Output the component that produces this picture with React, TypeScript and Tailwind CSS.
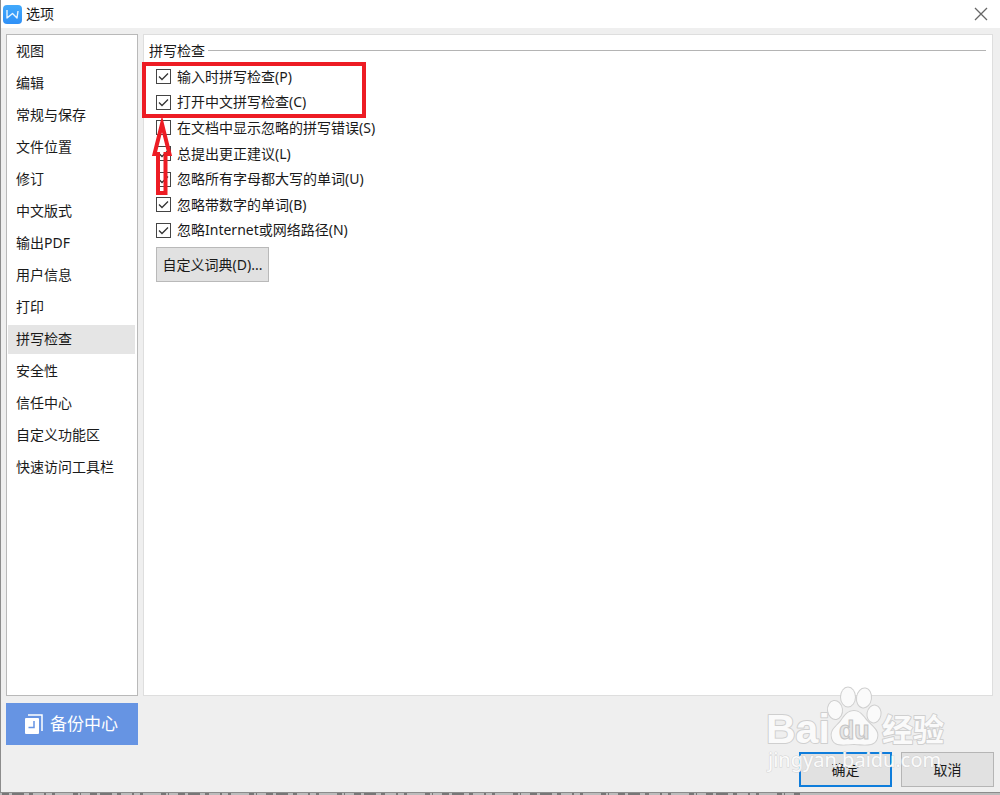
import { useState } from "react";

const sections = [
  "视图",
  "编辑",
  "常规与保存",
  "文件位置",
  "修订",
  "中文版式",
  "输出PDF",
  "用户信息",
  "打印",
  "拼写检查",
  "安全性",
  "信任中心",
  "自定义功能区",
  "快速访问工具栏",
];

const spellOptions = [
  { id: "typing", label: "输入时拼写检查(P)", on: true },
  { id: "chinese", label: "打开中文拼写检查(C)", on: true },
  { id: "ignored", label: "在文档中显示忽略的拼写错误(S)", on: false },
  { id: "suggest", label: "总提出更正建议(L)", on: true },
  { id: "upper", label: "忽略所有字母都大写的单词(U)", on: true },
  { id: "digits", label: "忽略带数字的单词(B)", on: true },
  { id: "paths", label: "忽略Internet或网络路径(N)", on: true },
];

export default function App() {
  const [active, setActive] = useState("拼写检查");

  return (
    <div className="flex min-h-screen flex-col bg-[#efefef] font-['Noto_Sans','Noto_Sans_CJK_SC',sans-serif] text-sm text-[#1a1a1a]">
      <div className="relative flex flex-1 flex-col border-b border-l border-[#8c8c8c]">
        <TitleBar />

        <div className="flex flex-1 gap-[5px] pl-[5px] pr-[7px] pt-[6px]">
          <nav
            aria-label="选项"
            className="w-[132px] shrink-0 border border-[#b9b9b9] bg-white pl-px pr-[2px] pt-[2px]"
          >
            <ul>
              {sections.map((name) => (
                <li key={name} className="mb-[3px]">
                  <button
                    type="button"
                    onClick={() => setActive(name)}
                    className={`block h-[29px] w-full whitespace-nowrap pb-[2px] pl-2 text-left leading-5 ${
                      active === name ? "bg-[#e5e5e5]" : ""
                    }`}
                  >
                    {name}
                  </button>
                </li>
              ))}
            </ul>
          </nav>
          <SpellPanel />
        </div>

        <footer className="mb-[5px] mt-[7px] flex h-[84px] justify-between pl-[5px] pr-[6px]">
          <button
            type="button"
            className="flex h-[42px] w-[132px] items-center gap-[7px] self-start bg-[#6694e3] pl-[19px] text-[17px] text-white"
          >
            <BackupIcon />
            备份中心
          </button>
          <div className="flex gap-[9px] self-end">
            <button type="button" className="h-[35px] w-[93px] border-2 border-[#0f7ddb] bg-[#e1e1e1]">
              确定
            </button>
            <button type="button" className="h-[35px] w-[93px] border border-[#b5b5b5] bg-[#e1e1e1]">
              取消
            </button>
          </div>
        </footer>

        <Watermark />
      </div>
      <PageEdge />
    </div>
  );
}

function TitleBar() {
  return (
    <header className="flex h-7 shrink-0 items-center bg-white pl-[2px] pr-3">
      <svg width="19" height="19" viewBox="0 0 19 19" aria-hidden="true">
        <defs>
          <linearGradient id="logo" x1="0" y1="0" x2="0" y2="1">
            <stop offset="0" stopColor="#42a9fb" />
            <stop offset="1" stopColor="#2f90f7" />
          </linearGradient>
        </defs>
        <rect width="19" height="19" rx="4" fill="url(#logo)" />
        <path
          d="M4 5V13L9.5 8.5L14 13L15 6"
          fill="none"
          stroke="#e6f4ff"
          strokeWidth="1.4"
          strokeLinejoin="round"
        />
      </svg>
      <h1 className="ml-1 flex-1">选项</h1>
      <button type="button" aria-label="关闭">
        <svg width="14" height="14" viewBox="0 0 14 14" aria-hidden="true">
          <path d="M1 1L13 13M13 1L1 13" stroke="#666" strokeWidth="1.3" />
        </svg>
      </button>
    </header>
  );
}

function SpellPanel() {
  return (
    <main className="relative min-w-0 flex-1 border border-[#dedede] bg-white">
      <div className="flex h-[29px] items-center gap-[3px] pl-[5px] pr-[6px] pt-[2px]">
        <h2>拼写检查</h2>
        <span className="h-px flex-1 bg-[#b4b4b4]" />
      </div>

      <div className="flex h-[179px] flex-col pl-3">
        {spellOptions.map((opt) => (
          <CheckRow key={opt.id} {...opt} />
        ))}
      </div>

      <button
        type="button"
        className="ml-3 mt-1 h-[35px] w-[113px] whitespace-nowrap border border-[#b9b9b9] bg-[#e1e1e1]"
      >
        自定义词典(D)...
      </button>

      {/* highlight frame and arrow over the first two options */}
      <div className="pointer-events-none absolute -left-[2px] top-[27px] h-[56px] w-[224px] border-4 border-[#ed1c24]" />
      <svg
        className="pointer-events-none absolute left-[6px] top-[80px]"
        width="24"
        height="82"
        viewBox="0 0 24 82"
        aria-hidden="true"
      >
        <path
          d="M12 9L4.500 39H8V78H15.500V39H19.500Z"
          fill="none"
          stroke="#ed1c24"
          strokeWidth="4"
          strokeMiterlimit="10"
        />
      </svg>
    </main>
  );
}

function CheckRow({ id, label, on }: { id: string; label: string; on: boolean }) {
  return (
    <div className="flex flex-1 items-center gap-[6px]">
      <span className="grid">
        <input
          id={id}
          type="checkbox"
          defaultChecked={on}
          className="peer col-start-1 row-start-1 h-[15px] w-[15px] appearance-none border border-[#444] bg-white"
        />
        <svg
          className="pointer-events-none invisible col-start-1 row-start-1 peer-checked:visible"
          width="15"
          height="15"
          viewBox="0 0 15 15"
          aria-hidden="true"
        >
          <path d="M3 7.5L6 10.5L12 4.5" fill="none" stroke="#333" strokeWidth="1.3" />
        </svg>
      </span>
      <label htmlFor={id} className="whitespace-nowrap leading-5">
        {label}
      </label>
    </div>
  );
}

function BackupIcon() {
  return (
    <svg width="18" height="20" viewBox="0 0 18 20" aria-hidden="true">
      <path d="M3 1H17V17" fill="none" stroke="#fff" strokeWidth="1.5" />
      <rect x="0" y="4" width="14" height="16" rx="1" fill="#fff" />
      <path d="M9 7V13.5H3.5" fill="none" stroke="#6694e3" strokeWidth="1.5" />
    </svg>
  );
}

function Watermark() {
  return (
    <svg
      className="pointer-events-none absolute bottom-[13px] right-[46px]"
      width="190"
      height="96"
      viewBox="0 0 190 96"
      aria-hidden="true"
    >
      <g fill="#fafafa" stroke="#cfcfcf" strokeWidth="2" strokeLinejoin="round" paintOrder="stroke">
        <ellipse cx="71" cy="27" rx="7" ry="9" transform="rotate(-8 71 27)" />
        <ellipse cx="84" cy="14" rx="7" ry="9.5" />
        <ellipse cx="100" cy="15" rx="7" ry="9.5" transform="rotate(8 100 15)" />
        <ellipse cx="110" cy="31" rx="6.5" ry="8.5" transform="rotate(10 110 31)" />
        <path d="M90 28C96 28 99 33 103 38C109 44 115 48 113 55C111 63 102 62 90 61C78 62 70 63 68 55C66 47 72 44 77 38C81 32 84 28 90 28Z" />
        <g className="font-['Liberation_Sans','Noto_Sans_CJK_SC',sans-serif] font-bold">
          <text x="2" y="60" fontSize="41">
            Bai
          </text>
          <text x="118" y="58" fontSize="31">
            经验
          </text>
        </g>
      </g>
      <text
        x="75"
        y="56"
        fontSize="25"
        fill="#e6e6e6"
        stroke="#c4c4c4"
        strokeWidth="1"
        className="font-['Liberation_Sans',sans-serif] font-bold"
      >
        du
      </text>
      <text
        x="4"
        y="84"
        fontSize="20"
        fill="#fff"
        fillOpacity="0.9"
        stroke="#d4d4d4"
        strokeWidth="1"
        paintOrder="stroke"
        className="font-['Noto_Sans',sans-serif]"
      >
        jingyan.baidu.com
      </text>
    </svg>
  );
}

// sliver of the document window behind the dialog
function PageEdge() {
  return (
    <svg className="h-[2px] w-full shrink-0 bg-[#bcbcbc]" aria-hidden="true">
      <line
        x1="2"
        y1="1"
        x2="800"
        y2="1"
        stroke="#777"
        strokeWidth="2"
        strokeDasharray="7 3 12 5 4 11 2 6 3 18 5 2 1 9"
      />
    </svg>
  );
}
